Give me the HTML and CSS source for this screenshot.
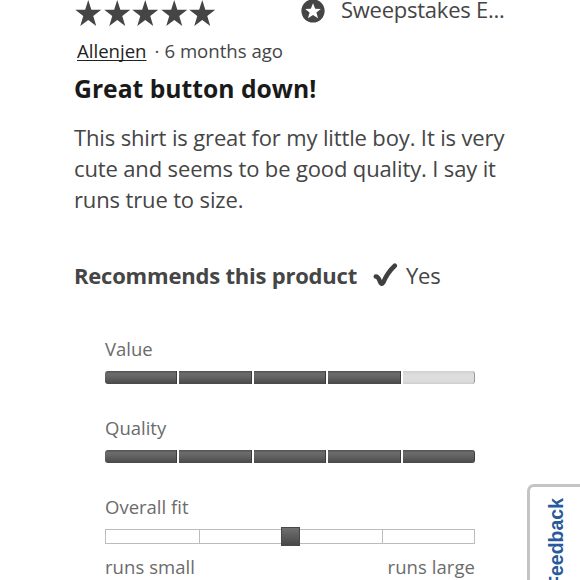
FILE: index.html
```html
<!DOCTYPE html>
<html lang="en">
<head>
    <meta charset="utf-8">
    <title>Product Review</title>
    <link rel="stylesheet" href="styles.css">
</head>
<body>
    <svg width="0" height="0" class="defs">
        <symbol id="star" viewBox="0 0 26 26">
            <path d="M13 0L16.1 9.8H26L18 16L21 26L13 19.9L5 26L8 16L0 9.8H9.9Z"/>
        </symbol>
    </svg>
    <div class="review">
        <div class="top">
            <div class="stars">
                <svg class="star"><use href="#star"/></svg>
                <svg class="star"><use href="#star"/></svg>
                <svg class="star"><use href="#star"/></svg>
                <svg class="star"><use href="#star"/></svg>
                <svg class="star"><use href="#star"/></svg>
            </div>
            <div class="badge">
                <svg class="badge-icon" viewBox="0 0 24 24">
                    <circle cx="12" cy="12" r="11.6" fill="#454545"/>
                    <path d="M12 4.2L14.2 9.7L19.8 10L15.4 13.6L17 19.2L12 16L7 19.2L8.6 13.6L4.2 10L9.8 9.7Z" fill="#fff"/>
                </svg>
                <span class="badge-text">Sweepstakes E...</span>
            </div>
        </div>
        <div class="meta"><a class="author">Allenjen</a><span class="dot">·</span><span class="date">6 months ago</span></div>
        <h3 class="title">Great button down!</h3>
        <p class="text">
            This shirt is great for my little boy. It is very<br>
            cute and seems to be good quality. I say it<br>
            runs true to size.
        </p>
        <div class="recommend">
            <b class="recommend-label">Recommends this product</b>
            <svg class="check" viewBox="0 0 25 25">
                <path d="M2.8 13.5Q5 13.5 6.8 18Q8.2 22.5 10.2 19.5Q14.500 9.500 21.800 2.800" fill="none" stroke="#404040" stroke-width="4.6" stroke-linecap="round" stroke-linejoin="round"/>
            </svg>
            <span class="yes">Yes</span>
        </div>
        <div class="ratings">
            <div class="label">Value</div>
            <div class="bar">
                <i class="on"></i><i class="on"></i><i class="on"></i><i class="on"></i><i></i>
            </div>
            <div class="label">Quality</div>
            <div class="bar">
                <i class="on"></i><i class="on"></i><i class="on"></i><i class="on"></i><i class="on"></i>
            </div>
            <div class="label">Overall fit</div>
            <div class="slider">
                <i></i><i></i><i></i><i></i>
                <span class="handle"></span>
            </div>
            <div class="ends">
                <span>runs small</span>
                <span>runs large</span>
            </div>
        </div>
    </div>
    <div class="feedback"><span>Feedback</span></div>
</body>
</html>
```
FILE: styles.css
```css
* {
    box-sizing: border-box;
}
html, body {
    height: 580px;
    overflow: hidden;
}
body {
    margin: 0;
    background: #fff;
    color: #454545;
    font-family: "Open Sans", sans-serif;
    font-size: 22px;
}
.defs {
    position: absolute;
}
.review {
    width: 446px;
    margin-left: 74px;
    white-space: nowrap;
}
.top {
    display: flex;
    height: 36px;
}
.stars {
    display: flex;
    gap: 2px;
    width: 227px;
    padding-left: 1px;
}
.star {
    width: 26.5px;
    height: 26px;
    fill: #454545;
}
.badge {
    display: flex;
    gap: 16px;
}
.badge-icon {
    width: 24px;
    height: 24px;
    margin-top: -1px;
}
.badge-text {
    line-height: 18px;
    letter-spacing: -0.25px;
}
.meta {
    height: 30px;
    padding-left: 3px;
    line-height: 30px;
    font-size: 18.6px;
}
.author {
    color: #222;
    text-decoration: underline;
    text-decoration-thickness: 1px;
    text-underline-offset: 2px;
    text-decoration-skip-ink: none;
}
.dot {
    margin: 0 5px 0 8px;
}
.title {
    margin: 0;
    padding-top: 1px;
    line-height: 43px;
    font-size: 24.7px;
    color: #1a1a1a;
}
.text {
    margin: 12px 0 45px;
    line-height: 31px;
    letter-spacing: -0.14px;
}
.recommend {
    display: flex;
    height: 30px;
    line-height: 30px;
    letter-spacing: -0.21px;
}
.check {
    width: 25px;
    height: 25px;
    margin: 3px 8px 0 16px;
}
.ratings {
    width: 370px;
    margin: 43px 0 0 31px;
    font-size: 18.5px;
    color: #6b6b6b;
}
.label {
    height: 38px;
    line-height: 31px;
}
.bar {
    display: flex;
    gap: 2px;
    height: 13px;
    margin-bottom: 28px;
}
.bar i {
    flex: 1;
    background: linear-gradient(#d0d0d0, #dedede 30%, #dcdcdc 80%, #cecece);
}
.bar i.on {
    background: linear-gradient(#505050, #6c6c6c 20%, #626262 50%, #484848);
    border-right: 1px solid #3c3c3c;
}
.bar i:first-child {
    border-radius: 3px 0 0 3px;
}
.bar i:last-child {
    border-radius: 0 3px 3px 0;
    border-right: 1px solid #999;
}
.bar i.on:last-child {
    border-right-color: #3c3c3c;
}
.slider {
    position: relative;
    display: flex;
    height: 15px;
    margin-bottom: 7px;
    border: 1px solid #bcbcbc;
}
.slider i {
    flex: 1;
    border-right: 1px solid #bcbcbc;
}
.slider i:first-child {
    flex-grow: 1.02;
}
.slider i:nth-child(4) {
    border: 0;
}
.handle {
    position: absolute;
    left: 175px;
    top: -3px;
    width: 19px;
    height: 19px;
    border: 1px solid #484848;
    background: linear-gradient(#707070, #484848);
}
.ends {
    display: flex;
    justify-content: space-between;
    line-height: 31px;
    letter-spacing: 0.06px;
}
/* side tab pinned to the right edge */
.feedback {
    position: absolute;
    left: 527px;
    top: 484px;
    width: 60px;
    height: 120px;
    padding: 11px 0 0 15px;
    border: 3px solid #c4c4c4;
    border-radius: 7px 0 0 7px;
    background: #fff;
}
.feedback span {
    display: block;
    writing-mode: vertical-rl;
    transform: rotate(180deg);
    width: 22px;
    line-height: 22px;
    font-family: "Liberation Sans", sans-serif;
    font-size: 19.5px;
    font-weight: bold;
    color: #28599a;
}
```
